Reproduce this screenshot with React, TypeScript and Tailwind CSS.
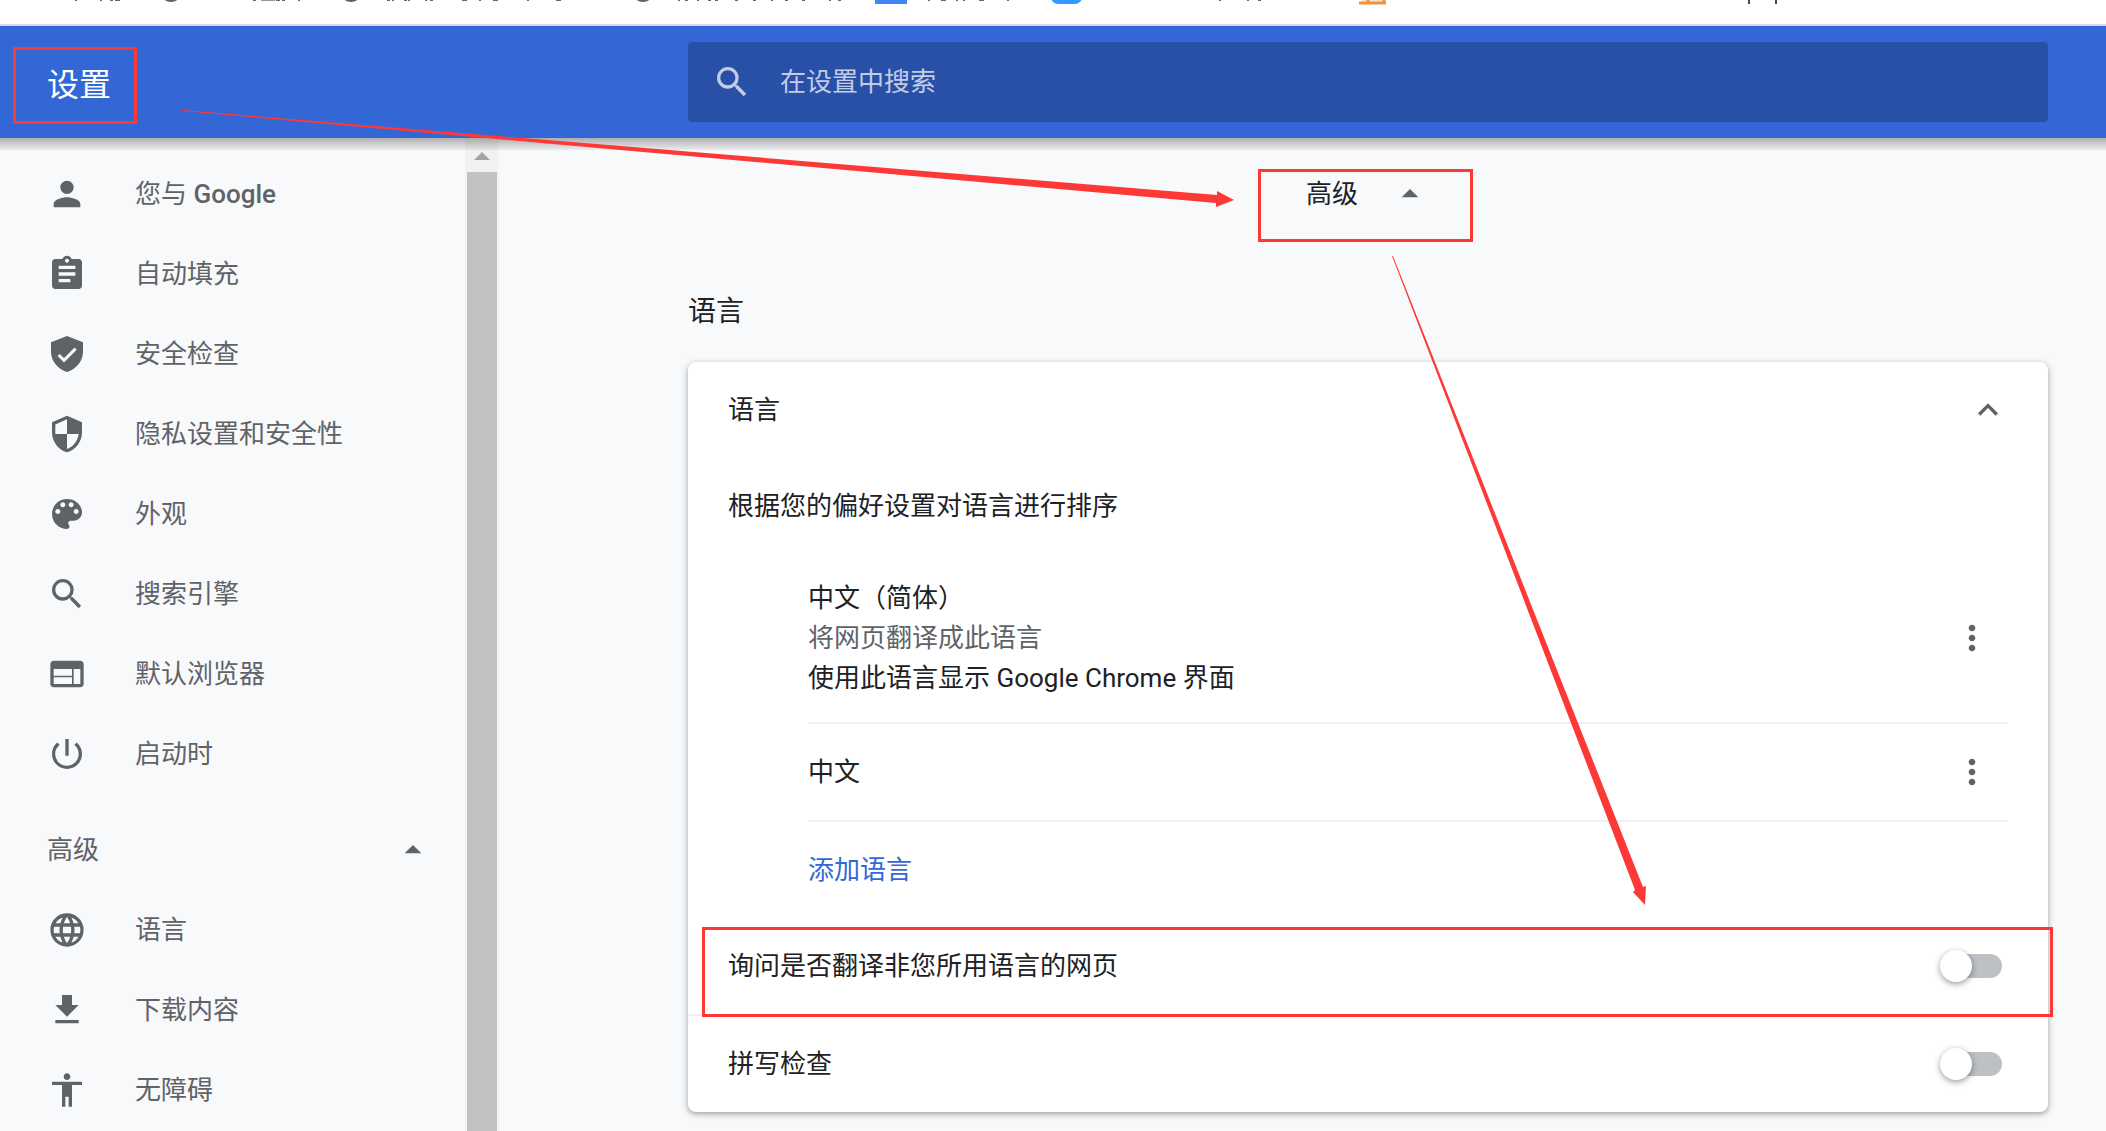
import type { ComponentType, ReactNode } from "react";
import {
  MdAccessibility,
  MdArrowDropUp,
  MdExpandLess,
  MdFileDownload,
  MdLanguage,
  MdMoreVert,
  MdPowerSettingsNew,
  MdSearch,
  MdWeb,
} from "react-icons/md";

type IconProps = { className?: string };

function PersonIcon({ className }: IconProps) {
  return (
    <svg viewBox="0 0 24 24" fill="currentColor" className={className} aria-hidden="true">
      <path d="M12 12c2.21 0 4-1.79 4-4s-1.79-4-4-4-4 1.79-4 4 1.79 4 4 4zm0 2c-2.67 0-8 1.34-8 4v2h16v-2c0-2.66-5.33-4-8-4z" />
    </svg>
  );
}

function ClipboardIcon({ className }: IconProps) {
  return (
    <svg viewBox="0 0 24 24" fill="currentColor" className={className} aria-hidden="true">
      <path
        fillRule="evenodd"
        d="M19 3h-4.18C14.4 1.84 13.3 1 12 1s-2.4.84-2.82 2H5c-1.1 0-2 .9-2 2v14c0 1.1.9 2 2 2h14c1.1 0 2-.9 2-2V5c0-1.1-.9-2-2-2zm-7-.2a1.2 1.2 0 1 1 0 2.4 1.2 1.2 0 0 1 0-2.4zM14 17H7v-2h7v2zm3-4H7v-2h10v2zm0-4H7V7h10v2z"
      />
    </svg>
  );
}

function ShieldCheckIcon({ className }: IconProps) {
  return (
    <svg viewBox="0 0 24 24" fill="none" className={className} aria-hidden="true">
      <path fill="currentColor" d="M12 1.2 2.4 4.9v5.9c0 5.3 4.1 10.3 9.6 12 5.5-1.7 9.6-6.7 9.6-12V4.9z" />
      <path stroke="#f8f9fb" strokeWidth="1.8" d="m7 12.6 3.2 3.2L17.2 8.8" />
    </svg>
  );
}

function ShieldIcon({ className }: IconProps) {
  return (
    <svg viewBox="0 0 24 24" fill="currentColor" className={className} aria-hidden="true">
      <path d="M12 1 3 5v6c0 5.55 3.84 10.74 9 12 5.16-1.26 9-6.45 9-12V5zm0 10.99h7c-.53 4.12-3.28 7.79-7 8.94V12H5V6.3l7-3.11z" />
    </svg>
  );
}

function PaletteIcon({ className }: IconProps) {
  return (
    <svg viewBox="0 0 24 24" fill="currentColor" className={className} aria-hidden="true">
      <path d="M12 3c-4.97 0-9 4.03-9 9s4.03 9 9 9c.83 0 1.5-.67 1.5-1.5 0-.39-.15-.74-.39-1.01-.23-.26-.38-.61-.38-.99 0-.83.67-1.5 1.5-1.5H16c2.76 0 5-2.24 5-5 0-4.42-4.03-8-9-8zm-5.5 9c-.83 0-1.5-.67-1.5-1.5S5.67 9 6.5 9 8 9.67 8 10.5 7.33 12 6.5 12zm3-4C8.67 8 8 7.33 8 6.5S8.67 5 9.5 5s1.5.67 1.5 1.5S10.33 8 9.5 8zm5 0c-.83 0-1.5-.67-1.5-1.5S13.67 5 14.5 5s1.5.67 1.5 1.5S15.33 8 14.5 8zm3 4c-.83 0-1.5-.67-1.5-1.5S16.67 9 17.5 9s1.5.67 1.5 1.5-.67 1.5-1.5 1.5z" />
    </svg>
  );
}

type MenuEntry = { label: ReactNode; Icon: ComponentType<IconProps> };

const basicMenu: MenuEntry[] = [
  {
    label: (
      <>
        您与 <span className="font-medium">Google</span>
      </>
    ),
    Icon: PersonIcon,
  },
  { label: "自动填充", Icon: ClipboardIcon },
  { label: "安全检查", Icon: ShieldCheckIcon },
  { label: "隐私设置和安全性", Icon: ShieldIcon },
  { label: "外观", Icon: PaletteIcon },
  { label: "搜索引擎", Icon: MdSearch },
  { label: "默认浏览器", Icon: MdWeb },
  { label: "启动时", Icon: MdPowerSettingsNew },
];

const advancedMenu: MenuEntry[] = [
  { label: "语言", Icon: MdLanguage },
  { label: "下载内容", Icon: MdFileDownload },
  { label: "无障碍", Icon: MdAccessibility },
];

function MenuList({ items }: { items: MenuEntry[] }) {
  return (
    <ul>
      {items.map(({ label, Icon }, i) => (
        <li key={i}>
          <a href="#" className="flex h-20 items-center gap-12 pl-[47px]">
            <Icon className="size-10 shrink-0" />
            <span>{label}</span>
          </a>
        </li>
      ))}
    </ul>
  );
}

// Lower edge of the bookmarks bar: [x, width] of each dark sliver.
const slivers = [
  [75, 2], [100, 2], [110, 3], [115, 5], [253, 3], [276, 4], [282, 3], [298, 2],
  [387, 3], [392, 2], [404, 3], [408, 2], [425, 2], [430, 3], [462, 5], [479, 2],
  [493, 5], [527, 2], [556, 5], [678, 2], [685, 3], [697, 2], [708, 3], [715, 3],
  [735, 3], [753, 3], [771, 2], [785, 3], [802, 3], [829, 2], [838, 3], [928, 2],
  [941, 5], [956, 2], [963, 2], [979, 5], [1007, 2], [1219, 2], [1247, 2], [1258, 3],
];

function BookmarksEdge() {
  return (
    <div className="h-[26px] overflow-hidden border-b-2 border-[#d9dbe2] bg-white">
      <svg width="2106" height="24" aria-hidden="true">
        {slivers.map(([x, w]) => (
          <rect key={x} x={x} y="0" width={w} height="1" fill="#6b6468" />
        ))}
        <rect x="261" width="14" height="1" fill="#a09296" />
        <circle cx="171" cy="-9" r="11" fill="#5f6368" />
        <circle cx="351" cy="-9" r="11" fill="#5f6368" />
        <circle cx="643" cy="-9" r="11" fill="#5f6368" />
        <rect x="875" width="32" height="4" fill="#4285f4" />
        <rect x="1051" y="-20" width="31" height="24" rx="7" fill="#3399ff" />
        <rect x="1362" width="22" height="4" fill="#fde3cc" />
        <path d="M1359 3h27M1368 0v4M1384 0v4" stroke="#f5923e" strokeWidth="3" />
        <rect x="1748" width="2" height="4" fill="#3c4a66" />
        <rect x="1775" width="2" height="4" fill="#3c4a66" />
      </svg>
    </div>
  );
}

function MoreButton({ label }: { label: string }) {
  return (
    <button type="button" aria-label={label} className="text-[#5f6368]">
      <MdMoreVert className="size-10" />
    </button>
  );
}

function ToggleRow({ id, label, marked }: { id: string; label: string; marked?: boolean }) {
  return (
    <div className="relative flex h-24 items-center justify-between px-10">
      <label htmlFor={id}>{label}</label>
      <input
        id={id}
        type="checkbox"
        role="switch"
        className="relative h-8 w-[68px] appearance-none before:absolute before:top-1 before:left-1.5 before:h-6 before:w-14 before:rounded-full before:bg-[#bdc1c6] after:absolute after:top-0 after:left-0 after:size-8 after:rounded-full after:bg-white after:shadow-[0_2px_6px_rgba(0,0,0,0.4)] checked:after:left-9"
      />
      {marked && (
        <span className="pointer-events-none absolute top-[9px] -right-[5px] -bottom-[3px] left-3.5 z-10 border-3 border-[#fd3937]" />
      )}
    </div>
  );
}

export default function App() {
  return (
    <div className="relative flex min-h-screen flex-col overflow-hidden bg-[#f8f9fb] font-[Roboto,'Noto_Sans_CJK_SC',sans-serif] text-[26px] leading-10 text-[#202124]">
      <BookmarksEdge />

      <header className="flex h-28 items-center bg-[#3367d6] text-white">
        <div className="w-[688px] shrink-0 pt-1.5 pl-[47px]">
          <h1 className="relative w-fit text-[32px]">
            设置
            <span className="pointer-events-none absolute -top-[18px] -right-[26px] -bottom-[19px] -left-[34px] border-3 border-[#fd3937]" />
          </h1>
        </div>
        <label className="mr-[58px] flex h-20 flex-1 items-center gap-7 rounded-sm bg-[#2850a7] pl-6 text-[#c3cce6]">
          <MdSearch className="size-10 shrink-0" />
          <input
            type="search"
            aria-label="在设置中搜索"
            placeholder="在设置中搜索"
            className="min-w-0 flex-1 bg-transparent outline-none placeholder:text-[#c3cce6]"
          />
        </label>
      </header>

      <div className="relative flex flex-1">
        <div className="pointer-events-none absolute inset-x-0 top-0 z-10 h-3 bg-linear-to-b from-black/30 to-black/5" />

        <nav className="w-[465px] shrink-0 pt-4 text-[#5f6368]">
          <MenuList items={basicMenu} />
          <button type="button" className="mt-4 flex h-20 w-full items-center justify-between pr-8 pl-[47px]">
            高级
            <MdArrowDropUp className="size-10" />
          </button>
          <MenuList items={advancedMenu} />
        </nav>

        <div className="flex w-[34px] shrink-0 flex-col bg-[#f1f1f1] px-0.5" aria-hidden="true">
          <div className="flex h-[34px] items-end justify-center pb-3">
            <svg width="16" height="8" viewBox="0 0 16 8">
              <path d="M8 0l8 8H0z" fill="#a3a3a3" />
            </svg>
          </div>
          <div className="flex-1 bg-[#c1c1c1]" />
        </div>

        <main className="flex-1 pt-9 pr-[58px] pb-4 pl-[189px]">
          <div className="flex justify-center">
            <button type="button" className="relative flex items-center gap-8">
              高级
              <MdArrowDropUp className="size-10 text-[#5f6368]" />
              <span className="pointer-events-none absolute -top-[5px] -right-[43px] -bottom-[28px] -left-12 border-3 border-[#fd3937]" />
            </button>
          </div>

          <h2 className="mt-[78px] text-[28px]">语言</h2>

          <section className="mt-[30px] rounded-lg bg-white shadow-[0_2px_4px_rgba(60,64,67,0.3),0_2px_6px_2px_rgba(60,64,67,0.15)]">
            <button type="button" className="flex h-24 w-full items-center justify-between px-10">
              语言
              <MdExpandLess className="size-10 text-[#5f6368]" />
            </button>
            <p className="flex h-24 items-center px-10">根据您的偏好设置对语言进行排序</p>

            <ul className="mr-10 ml-[120px]">
              <li className="flex items-center justify-between border-b-2 border-[#efefef] py-6 pr-4">
                <div>
                  <div>中文（简体）</div>
                  <div className="text-[#5f6368]">将网页翻译成此语言</div>
                  <div>使用此语言显示 Google Chrome 界面</div>
                </div>
                <MoreButton label="中文（简体）的更多操作" />
              </li>
              <li className="flex h-[98px] items-center justify-between border-b-2 border-[#efefef] pr-4">
                <div>中文</div>
                <MoreButton label="中文的更多操作" />
              </li>
              <li className="flex h-24 items-center">
                <a href="#" className="text-[#3367d6]">
                  添加语言
                </a>
              </li>
            </ul>

            <ToggleRow id="translate" label="询问是否翻译非您所用语言的网页" marked />
            <div className="border-t-2 border-[#efefef]">
              <ToggleRow id="spellcheck" label="拼写检查" />
            </div>
          </section>
        </main>
      </div>

      <svg
        className="pointer-events-none absolute top-0 left-0 z-20"
        width="2106"
        height="1131"
        viewBox="0 0 2106 1131"
        fill="#fd3937"
        aria-hidden="true"
      >
        <path d="M182 110L1217 195v-4l17 9-18 7v-4L182 111z" />
        <path d="M1393 256L1643 887l3-1-1 19-12-13 2-2L1392 256z" />
      </svg>
    </div>
  );
}
